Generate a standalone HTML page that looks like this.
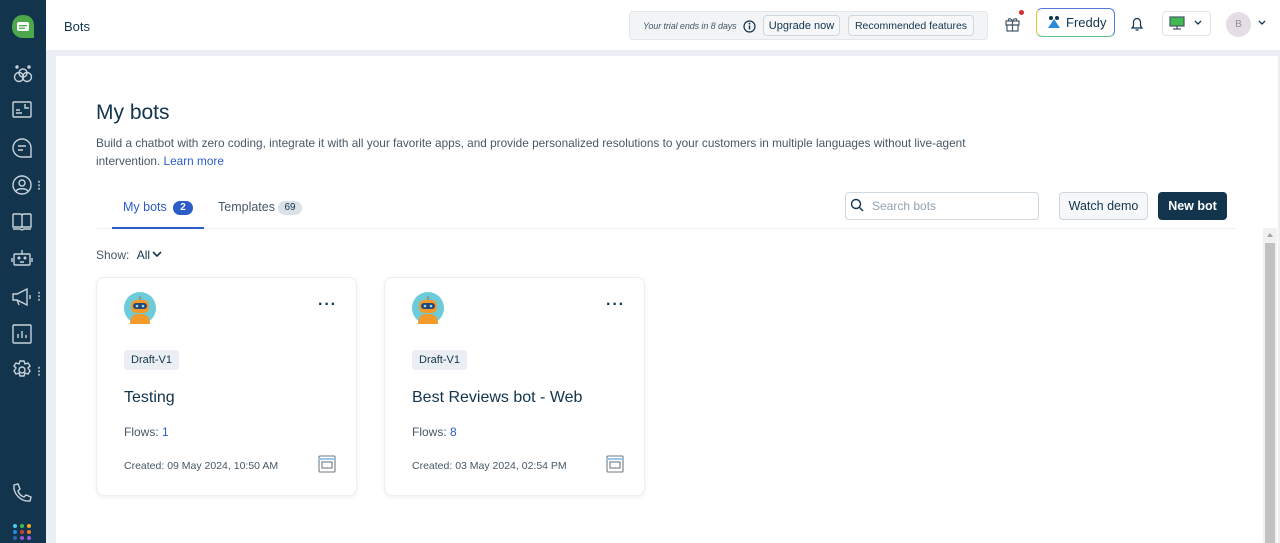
<!DOCTYPE html>
<html><head><meta charset="utf-8"><style>
*{box-sizing:border-box;margin:0;padding:0}
body{width:1280px;height:543px;overflow:hidden;font-family:"Liberation Sans",sans-serif;background:#ebeef2;position:relative;color:#12344d}
.side{position:absolute;left:0;top:0;width:46px;height:543px;background:#12344d}
.side svg{position:absolute;left:11px}
.dots{position:absolute;left:38px;width:2px;height:10px;background:radial-gradient(circle,#9aa8b5 1px,transparent 1.2px) 0 0/2px 3.5px}
.top{position:absolute;left:46px;top:0;width:1234px;height:50px;background:#fff}
.main{position:absolute;left:56px;top:56px;width:1222px;height:487px;background:#fff}
.abs{position:absolute}
.btn{position:absolute;border:1px solid #cfd7df;border-radius:4px;background:#f5f7f9;font-size:12px;color:#12344d;display:flex;align-items:center;justify-content:center}
.card{position:absolute;top:277px;width:261px;height:219px;border:1px solid #ebeff3;border-radius:8px;box-shadow:0 1px 4px rgba(18,52,77,.08);background:#fff}
.card .tag{position:absolute;left:27px;top:72px;background:#ebeff3;border-radius:3px;font-size:11px;padding:4px 7px;color:#12344d}
.card .t{position:absolute;left:27px;top:111px;font-size:16px;color:#12344d}
.card .f{position:absolute;left:27px;top:147px;font-size:12px;color:#475867}
.card .f b{font-weight:normal;color:#2c5cc5}
.card .c{position:absolute;left:27px;top:182px;font-size:10.5px;color:#475867}
.card .m{position:absolute;left:221px;top:18px;font-size:16px;letter-spacing:1px;font-weight:bold;color:#12344d}
.card .av{position:absolute;left:27px;top:14px}
.card .ic{position:absolute;left:221px;top:177px}
</style></head><body>
<div class="side">
<svg style="top:14px" width="24" height="26" viewBox="0 0 24 26"><path d="M12 1C5 1 1 6 1 13c0 7 5 11 11 11h11V12C23 5 19 1 12 1z" fill="#4ca84a"/><rect x="6" y="8" width="12" height="9" rx="2" fill="#fff"/><rect x="8" y="11" width="8" height="1.3" fill="#4ca84a"/><rect x="8" y="13.5" width="6" height="1.3" fill="#4ca84a"/></svg>
<svg style="top:64px" width="24" height="20" viewBox="0 0 24 20" fill="none" stroke="#c9d2da" stroke-width="1.4"><circle cx="8" cy="13" r="4.5"/><circle cx="16" cy="13" r="4.5"/><circle cx="12" cy="9" r="4"/><circle cx="6" cy="3" r="1" fill="#c9d2da"/><circle cx="18" cy="3" r="1" fill="#c9d2da"/></svg>
<svg style="top:100px" width="24" height="20" viewBox="0 0 24 20" fill="none" stroke="#c9d2da" stroke-width="1.4"><rect x="2" y="2" width="18" height="15" rx="1"/><path d="M5 13h6M5 10h4M14 4v4h4"/></svg>
<svg style="top:137px" width="24" height="22" viewBox="0 0 24 22" fill="none" stroke="#c9d2da" stroke-width="1.4"><path d="M11 2a9 9 0 1 0 0 18h9v-9a9 9 0 0 0-9-9z"/><path d="M7 9h8M7 13h5"/></svg>
<svg style="top:174px" width="24" height="22" viewBox="0 0 24 22" fill="none" stroke="#c9d2da" stroke-width="1.4"><circle cx="11" cy="11" r="9"/><circle cx="11" cy="9" r="3"/><path d="M5 17c2-3 10-3 12 0"/></svg>
<svg style="top:212px" width="24" height="20" viewBox="0 0 24 20" fill="none" stroke="#c9d2da" stroke-width="1.4"><path d="M2 2h7c2 0 2 1 2 3v11M20 2h-7c-2 0-2 1-2 3M2 2v13h18V2M2 17h7l2 1 2-1h7"/></svg>
<svg style="top:249px" width="24" height="22" viewBox="0 0 24 22" fill="none" stroke="#c9d2da" stroke-width="1.4"><path d="M11 1v4"/><rect x="3" y="5" width="16" height="11" rx="1"/><path d="M9 13h4M1 9v4M21 9v4"/><circle cx="8" cy="9" r=".8" fill="#c9d2da"/><circle cx="14" cy="9" r=".8" fill="#c9d2da"/></svg>
<svg style="top:286px" width="24" height="22" viewBox="0 0 24 22" fill="none" stroke="#c9d2da" stroke-width="1.4"><path d="M2 8h4l10-5v16L6 14H2zM6 14l2 5M19 9v4"/></svg>
<svg style="top:323px" width="24" height="22" viewBox="0 0 24 22" fill="none" stroke="#c9d2da" stroke-width="1.4"><rect x="2" y="2" width="18" height="18" rx="1"/><path d="M7 15v-4M11 15V8M15 15v-3"/></svg>
<svg style="top:360px" width="24" height="22" viewBox="0 0 24 22" fill="none" stroke="#c9d2da" stroke-width="1.4"><path d="M9 1h4l1 3 3-1 2 3-2 2 2 3-2 3-3-1-1 3H9l-1-3-3 1-2-3 2-3-2-2 2-3 3 1z"/><circle cx="11" cy="10" r="3"/></svg>
<div class="dots" style="top:180px"></div><div class="dots" style="top:291px"></div><div class="dots" style="top:366px"></div>
<svg style="top:482px" width="24" height="22" viewBox="0 0 24 22" fill="none" stroke="#c9d2da" stroke-width="1.4"><path d="M3 3l4-1 2 5-2 2c1 3 3 5 6 6l2-2 5 2-1 4C10 20 2 12 3 3z"/></svg>
<svg style="top:522px" width="24" height="21" viewBox="0 0 24 21"><g><circle cx="4" cy="4" r="2" fill="#4dc9e0"/><circle cx="11" cy="4" r="2" fill="#3fb950"/><circle cx="18" cy="4" r="2" fill="#f5a623"/><circle cx="4" cy="10" r="2" fill="#2c8ad8"/><circle cx="11" cy="10" r="2" fill="#d93a3a"/><circle cx="18" cy="10" r="2" fill="#f07a20"/><circle cx="4" cy="16" r="2" fill="#2a6ab0"/><circle cx="11" cy="16" r="2" fill="#9b59d0"/><circle cx="18" cy="16" r="2" fill="#a55bd8"/></g></svg>
</div>
<div class="top">
<div class="abs" style="left:18px;top:19px;font-size:13px;color:#12344d">Bots</div>
<div class="abs" style="left:583px;top:11px;width:359px;height:29px;background:#f2f4f6;border:1px solid #e4e8ec;border-radius:4px"></div>
<div class="abs" style="left:597px;top:21px;font-size:9px;font-style:italic;color:#475867;letter-spacing:-0.1px">Your trial ends in 8 days</div>
<svg class="abs" style="left:697px;top:20px" width="13" height="13" viewBox="0 0 13 13"><circle cx="6.5" cy="6.5" r="5.5" fill="none" stroke="#12344d" stroke-width="1.2"/><path d="M6.5 5.5v4" stroke="#12344d" stroke-width="1.4"/><circle cx="6.5" cy="3.7" r=".9" fill="#12344d"/></svg>
<div class="btn" style="left:717px;top:15px;width:77px;height:21px;font-size:11px">Upgrade now</div>
<div class="btn" style="left:802px;top:15px;width:126px;height:21px;font-size:10.5px">Recommended features</div>
<svg class="abs" style="left:958px;top:15px" width="18" height="17" viewBox="0 0 18 17" fill="none" stroke="#475867" stroke-width="1.2"><rect x="2" y="6" width="13" height="4"/><rect x="3" y="10" width="11" height="6"/><path d="M8.5 6v10M8.5 6C6 2 3 4 5 6M8.5 6c2.5-4 5.5-2 3.5 0"/></svg>
<div class="abs" style="left:973px;top:10px;width:5px;height:5px;border-radius:50%;background:#d72d30"></div>
<div class="abs" style="left:990px;top:8px;width:79px;height:29px;border-radius:6px;border:1.5px solid #4f7ad8;border-left-color:#e3c23a;border-bottom-color:#62c28a;background:#fff"></div>
<svg class="abs" style="left:1001px;top:15px" width="14" height="14" viewBox="0 0 14 14"><circle cx="4" cy="3" r="2" fill="#12344d"/><circle cx="10" cy="3" r="2" fill="#12344d"/><path d="M7 4L1 13h12z" fill="#2c8ad8"/></svg>
<div class="abs" style="left:1020px;top:15px;font-size:13px;color:#12344d">Freddy</div>
<svg class="abs" style="left:1084px;top:16px" width="14" height="16" viewBox="0 0 14 16" fill="none" stroke="#12344d" stroke-width="1.2"><path d="M2 12h10l-1.5-2V6a3.5 3.5 0 0 0-7 0v4zM5.5 14h3"/></svg>
<div class="abs" style="left:1116px;top:11px;width:49px;height:25px;border:1px solid #dfe4e9;border-radius:4px;background:#fff"></div>
<svg class="abs" style="left:1123px;top:16px" width="16" height="15" viewBox="0 0 16 15"><rect x="1" y="1" width="14" height="9" fill="#3fb950" stroke="#475867" stroke-width="1.2"/><path d="M8 10v3M4 13h8" stroke="#475867" stroke-width="1.3"/></svg>
<svg class="abs" style="left:1148px;top:20px" width="8" height="6" viewBox="0 0 8 6"><path d="M1 1l3 3 3-3" fill="none" stroke="#12344d" stroke-width="1.3"/></svg>
<div class="abs" style="left:1180px;top:12px;width:25px;height:25px;border-radius:50%;background:#e4dde4;color:#9a8a9a;font-size:10px;text-align:center;line-height:25px">B</div>
<svg class="abs" style="left:1212px;top:20px" width="8" height="6" viewBox="0 0 8 6"><path d="M1 1l3 3 3-3" fill="none" stroke="#12344d" stroke-width="1.3"/></svg>
</div>
<div class="main"></div>
<div class="abs" style="left:96px;top:101px;font-size:21px;color:#12344d">My bots</div>
<div class="abs" style="left:96px;top:134px;width:900px;font-size:11.8px;line-height:18px;color:#475867">Build a chatbot with zero coding, integrate it with all your favorite apps, and provide personalized resolutions to your customers in multiple languages without live-agent intervention. <span style="color:#2c5cc5">Learn more</span></div>
<div class="abs" style="left:123px;top:200px;font-size:12.5px;color:#2c5cc5">My bots</div>
<div class="abs" style="left:173px;top:201px;width:20px;height:14px;border-radius:7px;background:#2c5cc5;color:#fff;font-size:10px;font-weight:bold;text-align:center;line-height:14px">2</div>
<div class="abs" style="left:218px;top:200px;font-size:12.5px;color:#475867">Templates</div>
<div class="abs" style="left:278px;top:201px;width:24px;height:14px;border-radius:7px;background:#dbe1e7;color:#12344d;font-size:10px;text-align:center;line-height:14px">69</div>
<div class="abs" style="left:96px;top:228px;width:1140px;height:1px;background:#ebeff3"></div>
<div class="abs" style="left:112px;top:227px;width:92px;height:2px;background:#2c5cc5"></div>
<div class="abs" style="left:96px;top:248px;font-size:12px;color:#475867">Show: <span style="color:#12344d;margin-left:4px">All</span></div>
<svg class="abs" style="left:152px;top:250px" width="10" height="8" viewBox="0 0 10 8"><path d="M1 2l4 4 4-4" fill="none" stroke="#12344d" stroke-width="1.6"/></svg>
<div class="abs" style="left:845px;top:192px;width:194px;height:28px;border:1px solid #cfd7df;border-radius:4px;background:#fff"></div>
<svg class="abs" style="left:850px;top:198px" width="14" height="14" viewBox="0 0 14 14" fill="none" stroke="#12344d" stroke-width="1.4"><circle cx="6" cy="6" r="4.5"/><path d="M9.5 9.5L13 13"/></svg>
<div class="abs" style="left:872px;top:199px;font-size:12px;color:#92a2b1">Search bots</div>
<div class="btn" style="left:1059px;top:192px;width:89px;height:28px;font-size:12.5px">Watch demo</div>
<div class="abs" style="left:1158px;top:192px;width:69px;height:28px;border-radius:4px;background:#12344d;color:#fff;font-size:12.5px;font-weight:bold;text-align:center;line-height:28px">New bot</div>
<div class="abs" style="left:1263px;top:228px;width:14px;height:315px;background:#f1f1f1"></div>
<div class="abs" style="left:1265px;top:243px;width:10px;height:300px;background:#c1c1c1"></div>
<div class="abs" style="left:1267px;top:233px;width:0;height:0;border:3px solid transparent;border-bottom:4px solid #a3a3a3;border-top:0"></div>

<div class="card" style="left:96px">
<svg class="av" width="32" height="32" viewBox="0 0 32 32"><circle cx="16" cy="16" r="16" fill="#6ccbd8"/><path d="M16 4v4" stroke="#c46a1a"/><rect x="7" y="8" width="18" height="13" rx="5" fill="#f39a2a"/><rect x="9" y="11" width="14" height="6" rx="3" fill="#27477a"/><circle cx="13" cy="14" r="1.3" fill="#8fe0f0"/><circle cx="19" cy="14" r="1.3" fill="#8fe0f0"/><path d="M6 32c0-8 4-10 10-10s10 2 10 10z" fill="#f39a2a"/></svg>
<div class="m">···</div>
<div class="tag">Draft-V1</div>
<div class="t">Testing</div>
<div class="f">Flows: <b>1</b></div>
<div class="c">Created: 09 May 2024, 10:50 AM</div>
<svg class="ic" width="18" height="18" viewBox="0 0 18 18" fill="none" stroke="#6f7c87" stroke-width="1.1"><rect x="1" y="1" width="16" height="16" rx="1"/><path d="M1 4h16" stroke="#9ec4ea" stroke-width="2"/><rect x="4" y="7" width="10" height="6"/><path d="M6 10h.1M9 10h.1M12 10h.1"/></svg>
</div>
<div class="card" style="left:384px">
<svg class="av" width="32" height="32" viewBox="0 0 32 32"><circle cx="16" cy="16" r="16" fill="#6ccbd8"/><path d="M16 4v4" stroke="#c46a1a"/><rect x="7" y="8" width="18" height="13" rx="5" fill="#f39a2a"/><rect x="9" y="11" width="14" height="6" rx="3" fill="#27477a"/><circle cx="13" cy="14" r="1.3" fill="#8fe0f0"/><circle cx="19" cy="14" r="1.3" fill="#8fe0f0"/><path d="M6 32c0-8 4-10 10-10s10 2 10 10z" fill="#f39a2a"/></svg>
<div class="m">···</div>
<div class="tag">Draft-V1</div>
<div class="t">Best Reviews bot - Web</div>
<div class="f">Flows: <b>8</b></div>
<div class="c">Created: 03 May 2024, 02:54 PM</div>
<svg class="ic" width="18" height="18" viewBox="0 0 18 18" fill="none" stroke="#6f7c87" stroke-width="1.1"><rect x="1" y="1" width="16" height="16" rx="1"/><path d="M1 4h16" stroke="#9ec4ea" stroke-width="2"/><rect x="4" y="7" width="10" height="6"/><path d="M6 10h.1M9 10h.1M12 10h.1"/></svg>
</div>
</body></html>
